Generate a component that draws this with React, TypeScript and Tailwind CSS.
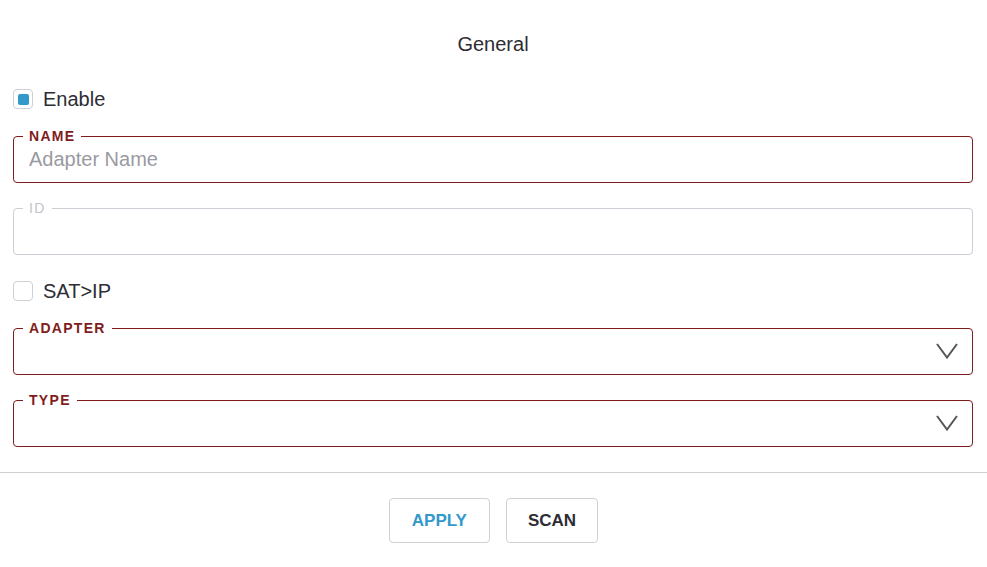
import React from "react";

function Check({ checked, label }: { checked?: boolean; label: string }) {
  return (
    <label className="flex items-center gap-[10px] h-[20px]">
      <span className="w-[20px] h-[20px] rounded-[4px] border border-[#cfcfd6] bg-white flex items-center justify-center">
        {checked && <span className="w-[11px] h-[11px] rounded-[2px] bg-[#3399cc]" />}
      </span>
      <span className="text-[20px] leading-[23px] text-[#2d2d33]">{label}</span>
    </label>
  );
}

function Field({
  legend,
  disabled,
  placeholder,
  select,
}: {
  legend: string;
  disabled?: boolean;
  placeholder?: string;
  select?: boolean;
}) {
  return (
    <fieldset
      className={`rounded-[4px] border pl-[9px] pr-[14px] ${
        disabled ? "border-[#cdcdd5]" : "border-[#7f1d1d]"
      }`}
    >
      <legend
        className={`px-[6px] text-[14px] leading-[16px] font-bold tracking-[1.3px] ${
          disabled ? "text-[#c3c3cb] font-normal" : "text-[#7f1d1d]"
        }`}
      >
        {legend}
      </legend>
      {select ? (
        <div className="h-[38px] flex justify-end items-start pt-[7px]">
          <svg width="22" height="16" viewBox="0 0 22 16" fill="none">
            <path d="M1 1L11 14.5L21 1" stroke="#555" strokeWidth="2" />
          </svg>
        </div>
      ) : (
        <div className="h-[38px] flex items-start pt-[4px] pl-[6px]">
          <input
            disabled={disabled}
            placeholder={placeholder}
            className="flex-1 h-[23px] text-[20px] leading-[23px] outline-none bg-transparent placeholder:text-[#9a9aa2]"
          />
        </div>
      )}
    </fieldset>
  );
}

export default function App() {
  return (
    <div
      className="w-[987px] h-[567px] bg-white overflow-hidden"
      style={{ fontFamily: '"Liberation Sans", Arial, sans-serif' }}
    >
      <div className="px-[13px] pt-[32px] pr-[14px]">
        <div className="text-center text-[20px] leading-[24px] text-[#2d2d33]">General</div>
        <div className="mt-[33px]">
          <Check checked label="Enable" />
        </div>
        <div className="mt-[19px]">
          <Field legend="NAME" placeholder="Adapter Name" />
        </div>
        <div className="mt-[17px]">
          <Field legend="ID" disabled />
        </div>
        <div className="mt-[26px]">
          <Check label="SAT>IP" />
        </div>
        <div className="mt-[19px]">
          <Field legend="ADAPTER" select />
        </div>
        <div className="mt-[17px]">
          <Field legend="TYPE" select />
        </div>
      </div>
      <div className="mt-[25px] border-t border-[#d0d0d6]" />
      <div className="mt-[25px] flex justify-center gap-[16px]">
        <button className="h-[45px] px-[22px] rounded-[4px] border border-[#cfcfd6] text-[17px] font-bold text-[#3399cc]">
          APPLY
        </button>
        <button className="h-[45px] px-[21px] rounded-[4px] border border-[#cfcfd6] text-[17px] font-bold text-[#2d2d33]">
          SCAN
        </button>
      </div>
    </div>
  );
}
